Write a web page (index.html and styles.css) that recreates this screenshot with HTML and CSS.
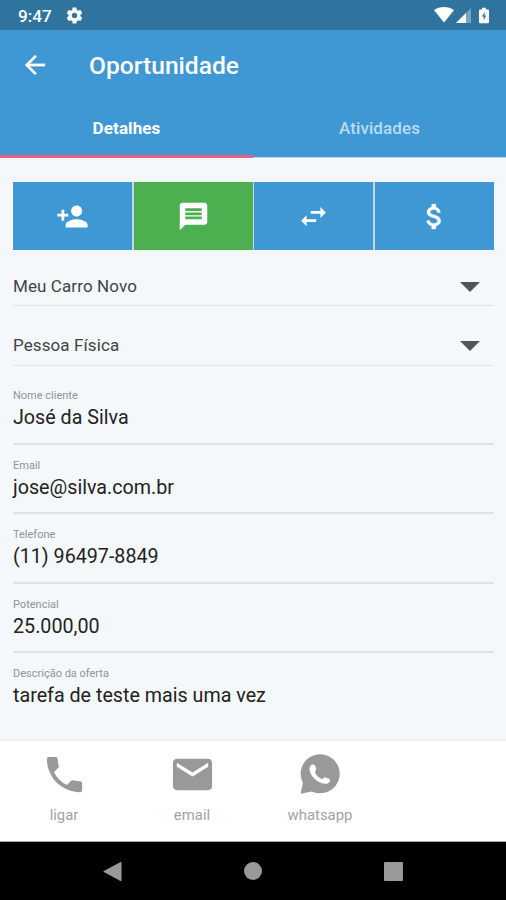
FILE: index.html
```html
<!DOCTYPE html>
<html lang="pt-BR">
<head>
<meta charset="utf-8">
<title>Oportunidade</title>
<link rel="stylesheet" href="styles.css">
</head>
<body>
<div class="status">
  <span class="clock">9:47</span>
  <svg class="gear" viewBox="0 0 24 24"><path fill-rule="evenodd" d="M19.43 12.98c.04-.32.07-.64.07-.98s-.03-.66-.07-.98l2.11-1.65c.19-.15.24-.42.12-.64l-2-3.46c-.12-.22-.39-.3-.61-.22l-2.49 1c-.52-.4-1.08-.73-1.69-.98l-.38-2.65C14.46 2.18 14.25 2 14 2h-4c-.25 0-.46.18-.49.42l-.38 2.65c-.61.25-1.17.59-1.69.98l-2.49-1c-.23-.09-.49 0-.61.22l-2 3.46c-.13.22-.07.49.12.64l2.11 1.65c-.04.32-.07.65-.07.98s.03.66.07.98l-2.11 1.65c-.19.15-.24.42-.12.64l2 3.46c.12.22.39.3.61.22l2.49-1c.52.4 1.08.73 1.69.98l.38 2.65c.03.24.24.42.49.42h4c.25 0 .46-.18.49-.42l.38-2.65c.61-.25 1.17-.59 1.69-.98l2.49 1c.23.09.49 0 .61-.22l2-3.46c.12-.22.07-.49-.12-.64l-2.11-1.65zM12 15.5c-1.93 0-3.5-1.57-3.5-3.5s1.57-3.5 3.5-3.5 3.5 1.57 3.5 3.5-1.57 3.5-3.5 3.5z"/></svg>
  <div class="indicators">
    <svg class="wifi" viewBox="0 0 20 16"><path d="M0 3.2C5.5-1 14.500-1 20 3.200L10 15.500z"/></svg>
    <svg class="signal" viewBox="0 0 15 16"><path opacity=".35" d="M15 0v15H0z"/><path d="M10 5v10H0z"/></svg>
    <svg class="battery" viewBox="0 0 11 17"><path fill-rule="evenodd" d="M3.500 0h4v1.800H10q1 0 1 1V16q0 1-1 1H1q-1 0-1-1V2.800q0-1 1-1h2.500zM6.700 4.300 3 9.600h2.100v4.200L8 8.500H6z"/></svg>
  </div>
</div>
<header class="header">
  <div class="bar">
    <svg class="back" viewBox="0 0 24 24"><path d="M20 11H7.830l5.590-5.590L12 4l-8 8 8 8 1.410-1.410L7.830 13H20v-2z"/></svg>
    <h1 class="title">Oportunidade</h1>
  </div>
  <nav class="tabs">
    <div class="tab tab-active"><span>Detalhes</span></div>
    <div class="tab"><span>Atividades</span></div>
  </nav>
</header>
<main class="content">
  <div class="actions">
    <div class="action"><svg viewBox="0 0 24 24"><path d="M15 12c2.210 0 4-1.790 4-4s-1.790-4-4-4-4 1.790-4 4 1.790 4 4 4zm-9-2V7H4v3H1v2h3v3h2v-3h3v-2H6zm9 4c-2.670 0-8 1.340-8 4v2h16v-2c0-2.660-5.330-4-8-4z"/></svg></div>
    <div class="action action-green"><svg viewBox="0 0 24 24"><path d="M20 2H4c-1.100 0-1.990.9-1.990 2L2 22l4-4h14c1.100 0 2-.9 2-2V4c0-1.100-.9-2-2-2zm-2 12H6v-2h12v2zm0-3H6V9h12v2zm0-3H6V6h12v2z"/></svg></div>
    <div class="action"><svg viewBox="0 0 24 24"><path d="M6.990 11L3 15l3.990 4v-3H14v-2H6.990v-3zM21 9l-3.990-4v3H10v2h7.010v3L21 9z"/></svg></div>
    <div class="action"><svg class="money" viewBox="0 0 24 24"><path d="M11.800 10.900c-2.270-.59-3-1.200-3-2.150 0-1.090 1.010-1.850 2.700-1.850 1.780 0 2.440.85 2.500 2.100h2.210c-.07-1.720-1.120-3.300-3.210-3.810V3h-3v2.160c-1.940.42-3.500 1.680-3.500 3.610 0 2.310 1.910 3.460 4.700 4.130 2.500.6 3 1.480 3 2.410 0 .69-.49 1.790-2.700 1.790-2.060 0-2.870-.92-2.980-2.100h-2.200c.12 2.190 1.760 3.420 3.680 3.830V21h3v-2.150c1.950-.37 3.500-1.500 3.500-3.550 0-2.840-2.430-3.810-4.700-4.400z"/></svg></div>
  </div>
  <div class="select select-first"><span>Meu Carro Novo</span><i class="caret"></i></div>
  <div class="select select-second"><span>Pessoa Física</span><i class="caret"></i></div>
  <div class="field"><div class="label">Nome cliente</div><div class="value">José da Silva</div></div>
  <div class="field"><div class="label">Email</div><div class="value">jose@silva.com.br</div></div>
  <div class="field"><div class="label">Telefone</div><div class="value">(11) 96497-8849</div></div>
  <div class="field"><div class="label">Potencial</div><div class="value">25.000,00</div></div>
  <div class="field field-last"><div class="label">Descrição da oferta</div><div class="value">tarefa de teste mais uma vez</div></div>
</main>
<footer class="contacts">
  <div class="contact"><svg viewBox="0 0 24 24"><path d="M6.620 10.790c1.440 2.830 3.760 5.140 6.590 6.590l2.200-2.200c.27-.27.67-.36 1.020-.24 1.120.37 2.330.57 3.570.57.55 0 1 .45 1 1V20c0 .55-.45 1-1 1-9.390 0-17-7.610-17-17 0-.55.45-1 1-1h3.500c.55 0 1 .45 1 1 0 1.250.2 2.450.57 3.570.11.35.03.74-.25 1.020l-2.200 2.200z"/></svg><span>ligar</span></div>
  <div class="contact"><svg viewBox="0 0 24 24"><path d="M20 4H4c-1.100 0-1.990.9-1.990 2L2 18c0 1.100.9 2 2 2h16c1.100 0 2-.9 2-2V6c0-1.100-.9-2-2-2zm0 4l-8 5-8-5V6l8 5 8-5v2z"/></svg><span>email</span></div>
  <div class="contact"><svg viewBox="0.5 0.5 47 47"><path d="M23.700 3.800a19.500 19.500 0 1 1-8.400 37.100L4.200 43.200 6.400 32.300A19.500 19.500 0 0 1 23.700 3.800z"/><path class="handset" d="M14.100 15c1-1.300 3.700-1.500 4.400-.2l1.200 3.500c.3 1.200-.7 2.200-1.500 3.300 1.400 3.100 4 5.700 7.500 7.200 1.500-1.300 2.200-2.400 3.600-1.800l3.300 1.500c1.300.7 1.200 2.200.2 3.200-2 2-5.200 2.100-8.800.5-4.900-2-8.700-6.100-10.400-10.400-.9-2.500-.9-5.100.5-6.800z"/></svg><span>whatsapp</span></div>
</footer>
<div class="navbar">
  <svg class="nav-back" viewBox="0 0 19 21"><path d="M18.500 1.500v18q0 1-1 .5L.8 11q-.8-.5 0-1L17.500.900q1-.4 1 .6z"/></svg>
  <i class="nav-home"></i>
  <i class="nav-recent"></i>
</div>
</body>
</html>
```
FILE: styles.css
```css
* { box-sizing: border-box; }
body {
  margin: 0;
  width: 506px;
  height: 900px;
  overflow: hidden;
  display: flex;
  flex-direction: column;
  font-family: Roboto, "Liberation Sans", sans-serif;
  background: #f4f8fb;
}
svg { display: block; fill: #fff; flex: none; }
.status {
  flex: none;
  height: 30px;
  display: flex;
  align-items: center;
  background: #2f739f;
  padding: 1px 16px 0 18px;
  color: #fff;
}
.clock { width: 46.500px; font-size: 17.200px; font-weight: 500; line-height: 30px; }
.gear { width: 19px; height: 19px; }
.indicators { margin-left: auto; display: flex; align-items: center; padding-bottom: 1px; }
.wifi { width: 20px; height: 16px; }
.signal { width: 15px; height: 16px; margin: 1px 8px 0 2px; }
.battery { width: 10px; height: 17px; margin-right: 1px; }
.header {
  flex: none;
  height: 128px;
  background: #3f98d3;
  color: #fff;
  display: flex;
  flex-direction: column;
}
.bar { height: 70px; display: flex; align-items: center; padding-left: 20px; }
.back { width: 30px; height: 30px; stroke: #fff; stroke-width: .2px; }
.title { margin: 2px 0 0 39px; font-size: 24.600px; font-weight: 500; line-height: 30px; }
.tabs { flex: 1; display: flex; }
.tab {
  flex: 1;
  display: flex;
  justify-content: center;
  padding-top: 17px;
  font-size: 17px;
  font-weight: 500;
  line-height: 22px;
  letter-spacing: .1px;
  color: #b7dcf3;
  border-bottom: 1px solid #b5d6ed;
}
.tab-active { color: #fff; font-weight: 700; border-bottom: 3px solid #ef5d7c; }
.content { flex: none; height: 581px; padding: 24px 12px 0 13px; }
.actions {
  display: grid;
  grid-template-columns: repeat(4, 1fr);
  gap: 1.500px;
  height: 68px;
  background: #c3daee;
}
.action {
  display: flex;
  align-items: center;
  justify-content: center;
  background: #3f98d3;
}
.action svg { width: 33px; height: 33px; margin-top: 1px; }
.action .money { stroke: #fff; stroke-width: .3px; }
.action-green { background: #4caf50; }
.select {
  display: flex;
  align-items: center;
  justify-content: space-between;
  border-bottom: 1px solid #dfe3e6;
  padding-right: 14px;
  font-size: 17px;
  letter-spacing: .1px;
  color: #414446;
}
.select-first { height: 56px; padding-top: 17px; }
.select-second { height: 60px; padding-top: 19px; }
.caret {
  margin-top: 1px;
  border-left: 10px solid transparent;
  border-right: 10px solid transparent;
  border-top: 10px solid #555;
}
.field { height: 69.500px; padding-top: 14px; border-bottom: 2px solid #dde2e5; }
.select-second + .field { height: 78.500px; padding-top: 23px; }
.field-last { border: 0; }
.label { font-size: 11px; line-height: 13px; color: #8f9396; }
.value { font-size: 19.700px; line-height: 26px; margin-top: 3px; color: #222; }
.contacts {
  flex: none;
  height: 103px;
  display: flex;
  background: #fff;
  border-top: 2px solid #eff1f3;
  border-bottom: 1px solid #aaa;
}
.contact {
  width: 128px;
  display: flex;
  flex-direction: column;
  align-items: center;
  padding-top: 10px;
  color: #a3a3a3;
  font-size: 14.900px;
  line-height: 20px;
}
.contact svg { width: 47px; height: 47px; fill: #999; margin-bottom: 7px; }
.contact .handset { fill: #fff; }
.navbar {
  flex: 1;
  display: flex;
  align-items: center;
  background: #000;
  padding-left: 103px;
}
.nav-back { width: 19px; height: 21px; fill: #999; }
.nav-home { width: 18px; height: 18px; margin-left: 122px; border-radius: 50%; background: #999; }
.nav-recent { width: 19px; height: 19px; margin-left: 122px; border-radius: 1px; background: #999; }
```
